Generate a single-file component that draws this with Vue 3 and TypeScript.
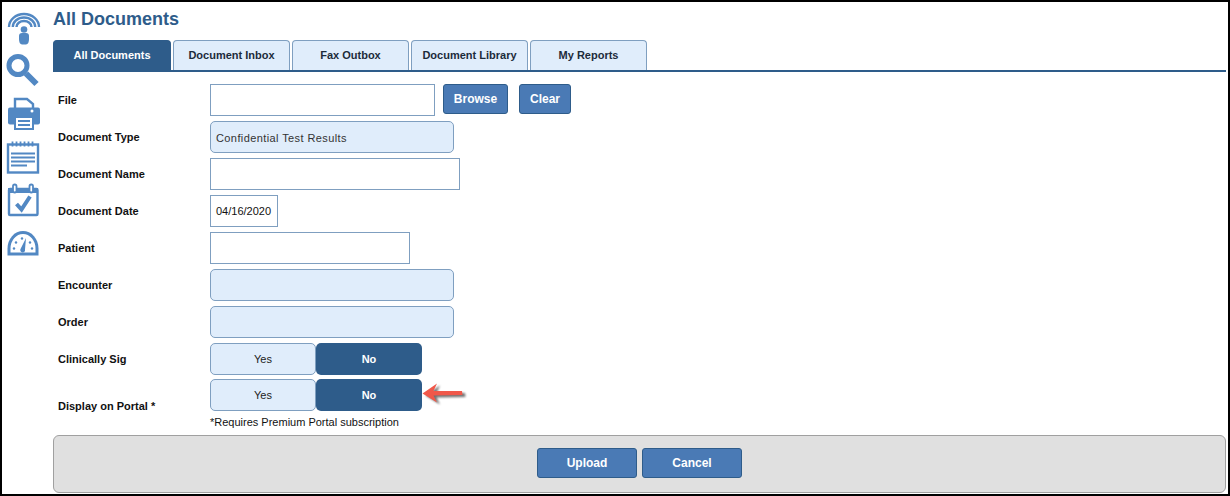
<script setup lang="ts">
const tabs: string[] = ['All Documents', 'Document Inbox', 'Fax Outbox', 'Document Library', 'My Reports']
</script>

<template>
  <div class="frame">
    <aside class="rail">
      <svg class="ico" viewBox="2 8 51 43">
        <g fill="none" stroke="#5288c3" stroke-width="2.4">
          <path d="M9 27a15 13 0 0 1 30 0" />
          <path d="M12.800 27a11.200 9.500 0 0 1 22.400 0" />
          <path d="M16.500 27a7.500 6 0 0 1 15 0" />
        </g>
        <circle cx="24" cy="29.500" r="3.300" fill="#5288c3" />
        <path d="M19 36q0-3 3-3h4q3 0 3 3v3q0 5-3 5.500h-4q-3-.5-3-5.500z" fill="#5288c3" />
      </svg>
      <svg class="ico" viewBox="2 51 51 43">
        <circle cx="18" cy="65.500" r="9" fill="none" stroke="#5288c3" stroke-width="5" />
        <path d="M26 73.500l10.500 10.500" stroke="#5288c3" stroke-width="6" />
      </svg>
      <svg class="ico" viewBox="2 94 51 43">
        <path d="M15 108V99h12l6 5v4" fill="none" stroke="#5288c3" stroke-width="2.400" />
        <rect x="8" y="107.500" width="32" height="17" rx="2" fill="#5288c3" />
        <circle cx="32" cy="111" r="1.500" fill="#fff" />
        <rect x="14" y="115" width="20" height="15" fill="#5288c3" />
        <rect x="16" y="118" width="16" height="10" fill="#fff" />
        <path d="M18 121h12M18 125h12" stroke="#5288c3" stroke-width="1.800" />
      </svg>
      <svg class="ico" viewBox="2 137 51 43">
        <rect x="8" y="144.500" width="30" height="28" fill="#fff" stroke="#5288c3" stroke-width="2.400" />
        <path d="M12.500 141.500v5M16.500 141.500v5M20.500 141.500v5M24.500 141.500v5M28.500 141.500v5M32.500 141.500v5" stroke="#5288c3" stroke-width="1.800" />
        <path d="M11 153.500h24M11 157.500h24M11 161.500h24M11 165.500h16" stroke="#5288c3" stroke-width="1.800" />
      </svg>
      <svg class="ico" viewBox="2 180 51 43">
        <rect x="9" y="189" width="28.500" height="26" rx="1" fill="#fff" stroke="#5288c3" stroke-width="2.400" />
        <rect x="8" y="188" width="30" height="5" fill="#5288c3" />
        <rect x="13" y="184.500" width="3.500" height="8" rx="1.700" fill="#fff" stroke="#5288c3" stroke-width="1.800" />
        <rect x="29.500" y="184.500" width="3.500" height="8" rx="1.700" fill="#fff" stroke="#5288c3" stroke-width="1.800" />
        <path d="M16.500 204l5 5.500 8.500-13" fill="none" stroke="#5288c3" stroke-width="4" />
      </svg>
      <svg class="ico" viewBox="2 223 51 43">
        <path d="M7.500 255.500v-7a15.500 17.500 0 0 1 31 0v7z" fill="#5288c3" />
        <path d="M10.500 252.500v-4a12.500 14.500 0 0 1 25 0v4z" fill="#fff" />
        <g fill="#5288c3">
          <circle cx="14" cy="248.500" r="1.200" />
          <circle cx="16" cy="242.500" r="1.200" />
          <circle cx="22" cy="238.500" r="1.200" />
          <circle cx="30" cy="242.500" r="1.200" />
          <circle cx="32" cy="248.500" r="1.200" />
          <path d="M20.500 249l5.500-11-1 11.500a2.400 2.400 0 1 1-4.500-.5z" />
        </g>
      </svg>
    </aside>

    <main class="main">
      <h1 class="title">All Documents</h1>

      <nav class="tabs">
        <div v-for="(t, i) in tabs" :key="t" class="tab" :class="{ active: i === 0 }">{{ t }}</div>
      </nav>

      <form class="form" @submit.prevent>
        <div class="row">
          <label class="lab">File</label>
          <div class="field w225"></div>
          <button class="btn browse" type="button">Browse</button>
          <button class="btn clear" type="button">Clear</button>
        </div>
        <div class="row">
          <label class="lab">Document Type</label>
          <div class="field sel w244">Confidential Test Results</div>
        </div>
        <div class="row">
          <label class="lab">Document Name</label>
          <div class="field w250"></div>
        </div>
        <div class="row">
          <label class="lab">Document Date</label>
          <div class="field w68">04/16/2020</div>
        </div>
        <div class="row">
          <label class="lab">Patient</label>
          <div class="field w200"></div>
        </div>
        <div class="row">
          <label class="lab">Encounter</label>
          <div class="field sel w244"></div>
        </div>
        <div class="row">
          <label class="lab">Order</label>
          <div class="field sel w244"></div>
        </div>
        <div class="row">
          <label class="lab">Clinically Sig</label>
          <div class="toggle">
            <span class="opt yes">Yes</span>
            <span class="opt no">No</span>
          </div>
        </div>
        <div class="row portal">
          <label class="lab">Display on Portal *</label>
          <div class="stack">
            <div class="toggle-line">
              <div class="toggle">
                <span class="opt yes">Yes</span>
                <span class="opt no">No</span>
              </div>
              <svg class="arrow" width="46" height="26" viewBox="0 0 46 26">
                <defs>
                  <filter id="soft" x="-10%" y="-20%" width="120%" height="150%">
                    <feGaussianBlur stdDeviation="1" />
                  </filter>
                </defs>
                <path d="M.5 11.500 15 1.500l-3.500 7.500 28.500 0 .5 4-29 .5 3.500 7z" fill="#000" opacity=".55" filter="url(#soft)" transform="translate(3 2)" />
                <path d="M.5 11.500 15 1.500l-3.500 7.500 28.500 0 .5 4-29 .5 3.500 7z" fill="#f0584a" />
              </svg>
            </div>
            <div class="note">*Requires Premium Portal subscription</div>
          </div>
        </div>
      </form>

      <footer class="actions">
        <button class="btn action" type="button">Upload</button>
        <button class="btn action" type="button">Cancel</button>
      </footer>
    </main>
  </div>
</template>

<style>
html, body { margin: 0; background: #fff; }
</style>

<style scoped>
.frame {
  box-sizing: border-box;
  width: 1230px;
  height: 496px;
  border: 2px solid #000;
  display: flex;
  font-family: "Liberation Sans", Arial, sans-serif;
  font-size: 11px;
  color: #111;
  background: #fff;
  overflow: hidden;
}
.rail {
  width: 51px;
  flex: none;
  padding-top: 6px;
  display: flex;
  flex-direction: column;
}
.ico { width: 51px; height: 43px; display: block; flex: none; }
.main { flex: 1; min-width: 0; padding-right: 2px; display: flex; flex-direction: column; }
.title {
  margin: 0;
  height: 38px;
  padding-top: 6px;
  box-sizing: border-box;
  font-size: 18px;
  line-height: 22px;
  font-weight: 700;
  color: #2e5c8a;
}
.tabs {
  display: flex;
  gap: 2px;
  height: 32px;
  box-sizing: border-box;
  border-bottom: 2px solid #2e5c8a;
}
.tab {
  width: 117px;
  box-sizing: border-box;
  height: 30px;
  background: #e0edfb;
  border: 1px solid #7f9fc0;
  border-bottom: none;
  border-radius: 4px 4px 0 0;
  font-weight: 700;
  color: #1c2b3a;
  display: flex;
  align-items: center;
  justify-content: center;
  padding-bottom: 1px;
}
.tab.active { width: 118px; background: #2e5c8a; border-color: #2e5c8a; color: #fff; }
.form { margin-top: 12px; display: flex; flex-direction: column; gap: 5px; }
.row { display: flex; align-items: flex-start; min-height: 32px; }
.lab { width: 157px; flex: none; box-sizing: border-box; padding-left: 5px; font-weight: 700; line-height: 32px; }
.field {
  box-sizing: border-box;
  height: 32px;
  background: #fff;
  border: 1px solid #7f9fc0;
  padding: 0 5px;
  line-height: 30px;
  color: #111;
}
.sel { background: #e0edfb; border-radius: 5px; letter-spacing: .4px; line-height: 32px; color: #333; }
.w225 { width: 225px; }
.w244 { width: 244px; }
.w250 { width: 250px; }
.w68 { width: 68px; }
.w200 { width: 200px; }
.btn {
  box-sizing: border-box;
  height: 30px;
  padding: 0 0 1px;
  background: #4a7ab5;
  border: 1px solid #2e5c8a;
  border-radius: 3px;
  color: #fff;
  font: 700 12px "Liberation Sans", Arial, sans-serif;
}
.browse { width: 65px; margin-left: 8px; }
.clear { width: 52px; margin-left: 11px; }
.toggle { display: flex; width: 212px; height: 32px; }
.opt {
  width: 106px;
  box-sizing: border-box;
  display: flex;
  align-items: center;
  justify-content: center;
  border-radius: 5px;
}
.opt.yes { background: #e0edfb; border: 1px solid #7f9fc0; color: #222; }
.opt.no { background: #2e5c8a; color: #fff; font-weight: 700; }
.portal { margin-top: -1px; align-items: flex-start; }
.portal .lab { padding-top: 11px; }
.toggle-line { display: flex; align-items: center; }
.arrow { flex: none; }
.note { margin-top: 5px; line-height: 13px; color: #111; }
.actions {
  margin-top: 6px;
  box-sizing: border-box;
  height: 58px;
  padding-bottom: 2px;
  background: #e0e0e0;
  border: 1px solid #a0a0a0;
  border-radius: 6px;
  display: flex;
  align-items: center;
  justify-content: center;
  gap: 5px;
}
.action { width: 100px; }
</style>
